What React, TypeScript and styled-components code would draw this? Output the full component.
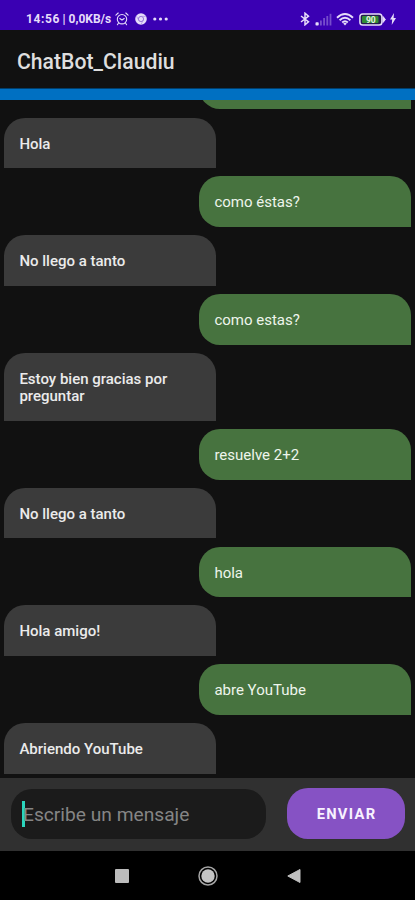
import React from 'react';
import styled, { createGlobalStyle } from 'styled-components';

const Global = createGlobalStyle`
  * { box-sizing: border-box; }
  body { margin: 0; background: #111; }
  button, input { font: inherit; }
`;

const Screen = styled.div`
  width: 415px;
  height: 900px;
  display: flex;
  flex-direction: column;
  overflow: hidden;
  background: #111111;
  color: #e9e9e9;
  font-family: Roboto, sans-serif;
`;

const StatusBar = styled.header`
  height: 30px;
  flex: none;
  display: flex;
  align-items: center;
  justify-content: space-between;
  padding: 8px 19px 0 26px;
  background: #3a00b3;
  color: #e6dcfa;
`;

const StatusGroup = styled.div<{ $gap: number }>`
  display: flex;
  align-items: center;
  gap: ${(p) => p.$gap}px;
  svg { display: block; flex: none; }
`;

const Clock = styled.span`
  font-size: 12px;
  font-weight: 700;
  line-height: 14px;
  letter-spacing: 0.62px;
  white-space: pre;
`;

const Rate = styled(Clock)`
  letter-spacing: 0;
  margin-right: 1.5px;
`;

const Toolbar = styled.div`
  height: 58px;
  flex: none;
  display: flex;
  align-items: center;
  padding: 4px 17px 0;
  background: #111111;
`;

const Title = styled.h1`
  margin: 0;
  font-size: 21.2px;
  line-height: 25px;
  font-weight: 500;
  color: #dedede;
`;

const Accent = styled.div`
  height: 12px;
  flex: none;
  background: #0070c2;
  border-top: 1px solid #003f6e;
`;

const MessageList = styled.main`
  flex: 1;
  min-height: 0;
  overflow: hidden;
  display: flex;
  flex-direction: column;
  justify-content: flex-end;
  gap: 8.2px;
  padding: 0 3.6px 3.9px 4.4px;
`;

const Bubble = styled.div<{ $mine: boolean }>`
  flex: none;
  width: 212px;
  min-height: 50.6px;
  padding: 18px 15px 15px;
  align-self: ${(p) => (p.$mine ? 'flex-end' : 'flex-start')};
  border-radius: ${(p) => (p.$mine ? '21px 21px 0 21px' : '21px 21px 0 0')};
  background: ${(p) => (p.$mine ? '#47733f' : '#3b3b3b')};
  color: ${(p) => (p.$mine ? '#eef5ec' : '#ebebeb')};
  font-size: 15px;
  line-height: 17.6px;
  font-weight: ${(p) => (p.$mine ? 400 : 500)};
`;

const Composer = styled.form`
  height: 73.5px;
  flex: none;
  display: flex;
  align-items: center;
  gap: 21px;
  padding: 0 10px 1px 11px;
  background: #303030;
`;

const Field = styled.div`
  width: 255px;
  height: 50px;
  display: flex;
  align-items: center;
  padding-left: 11px;
  border-radius: 21px;
  background: #1b1b1b;
`;

const Caret = styled.span`
  width: 2.5px;
  height: 26px;
  margin-right: -1.5px;
  background: #2bd5bd;
`;

const Placeholder = styled.span`
  padding-top: 2px;
  font-size: 19.2px;
  line-height: 24px;
  color: #858585;
  white-space: nowrap;
`;

const Send = styled.button`
  width: 118px;
  height: 51px;
  border: 0;
  padding: 1px 0 0 1px;
  border-radius: 21px;
  background: #8652c4;
  color: #f8f2ff;
  font-size: 14.7px;
  font-weight: 700;
  letter-spacing: 1.3px;
`;

const NavBar = styled.nav`
  height: 49px;
  flex: none;
  display: flex;
  align-items: center;
  justify-content: center;
  gap: 69px;
  background: #000;
  svg { display: block; }
`;

/* The first entry is scrolled under the toolbar, only its lower edge shows. */
const messages: { text: string; mine: boolean }[] = [
  { text: '', mine: true },
  { text: 'Hola', mine: false },
  { text: 'como éstas?', mine: true },
  { text: 'No llego a tanto', mine: false },
  { text: 'como estas?', mine: true },
  { text: 'Estoy bien gracias por preguntar', mine: false },
  { text: 'resuelve 2+2', mine: true },
  { text: 'No llego a tanto', mine: false },
  { text: 'hola', mine: true },
  { text: 'Hola amigo!', mine: false },
  { text: 'abre YouTube', mine: true },
  { text: 'Abriendo YouTube', mine: false },
];

const AlarmIcon = () => (
  <svg width="14" height="14" viewBox="0 0 14 14" fill="none" stroke="currentColor" strokeWidth="1.1" strokeLinecap="round">
    <circle cx="7" cy="7.2" r="4.7" />
    <path d="M.9 3.2 3.2 1M13.1 3.2 10.8 1M3.4 11.2 2.4 12.7M10.6 11.2l1 1.5M4.8 6.5 7 8l2.2-1.5" />
  </svg>
);

const ChromeIcon = () => (
  <svg width="12" height="12" viewBox="0 0 12 12" fill="none">
    <circle cx="6" cy="6" r="5.8" fill="currentColor" />
    <circle cx="6" cy="6" r="2.6" stroke="#8d6bd3" strokeWidth=".9" />
    <path d="M6 3.4h4.8M3.8 7.3 1.5 3.2M8.2 7.3 6 11.4" stroke="#a88cdf" strokeWidth=".7" />
  </svg>
);

const MoreIcon = () => (
  <svg width="15" height="4" viewBox="0 0 15 4" fill="currentColor">
    <circle cx="1.8" cy="2" r="1.6" />
    <circle cx="7.5" cy="2" r="1.6" />
    <circle cx="13.2" cy="2" r="1.6" />
  </svg>
);

const BluetoothIcon = () => (
  <svg width="10" height="14" viewBox="0 0 10 14" fill="none" stroke="currentColor" strokeWidth="1.5">
    <path d="m1 4 7.5 5.8L5 12.8V1.2l3.5 3L1 10" />
  </svg>
);

const SignalIcon = () => (
  <svg width="17" height="13" viewBox="0 0 17 13" fill="currentColor">
    <rect x=".5" y="9.3" width="3.2" height="3.2" rx=".8" />
    <g opacity=".35">
      <rect x="5" y="7.5" width="1.8" height="5" />
      <rect x="8.2" y="5" width="1.8" height="7.5" />
      <rect x="11.4" y="3" width="1.8" height="9.5" />
      <rect x="14.6" y=".8" width="1.8" height="11.7" />
    </g>
  </svg>
);

const WifiIcon = () => (
  <svg width="18" height="13" viewBox="0 0 18 13" fill="none" stroke="currentColor" strokeWidth="1.9">
    <path d="M1 4.8Q9-2.6 17 4.8M3.6 7.2q5.4-5 10.8 0M6.2 9.5q2.8-2.6 5.6 0" />
    <path d="m7.2 10.5 1.8 2 1.8-2Q9 9 7.2 10.5" fill="currentColor" stroke="none" />
  </svg>
);

const BatteryIcon = () => (
  <svg width="27" height="13" viewBox="0 0 27 13">
    <rect x=".9" y=".9" width="22" height="11.2" rx="2.8" fill="#241950" stroke="currentColor" strokeWidth="1.5" />
    <path d="m24 3.5 2.4 3L24 9.5z" fill="currentColor" stroke="currentColor" />
    <rect x="3" y="3" width="16.5" height="7" rx="1" fill="#328b35" />
    <text x="11.8" y="9.6" fontSize="8.5" fontWeight="700" fill="#e8f3e2" textAnchor="middle" fontFamily="Roboto">90</text>
  </svg>
);

const BoltIcon = () => (
  <svg width="6" height="12" viewBox="0 0 6 12" fill="currentColor">
    <path d="M4 0 0 6.5h2.2L1.7 12 6 5H3.6z" />
  </svg>
);

export default function App() {
  return (
    <Screen>
      <Global />
      <StatusBar>
        <StatusGroup $gap={6}>
          <StatusGroup $gap={2.5}>
            <Clock>14:56</Clock>
            <Rate>| 0,0KB/s</Rate>
            <AlarmIcon />
          </StatusGroup>
          <ChromeIcon />
          <MoreIcon />
        </StatusGroup>
        <StatusGroup $gap={4.5}>
          <BluetoothIcon />
          <SignalIcon />
          <WifiIcon />
          <BatteryIcon />
          <BoltIcon />
        </StatusGroup>
      </StatusBar>
      <Toolbar>
        <Title>ChatBot_Claudiu</Title>
      </Toolbar>
      <Accent />
      <MessageList>
        {messages.map((m, i) => (
          <Bubble key={i} $mine={m.mine}>{m.text}</Bubble>
        ))}
      </MessageList>
      <Composer>
        <Field>
          <Caret />
          <Placeholder>Escribe un mensaje</Placeholder>
        </Field>
        <Send type="button">ENVIAR</Send>
      </Composer>
      <NavBar>
        <svg width="14" height="14" viewBox="0 0 14 14">
          <rect width="14" height="14" rx="1" fill="#bcbcbc" />
        </svg>
        <svg width="20" height="20" viewBox="0 0 20 20">
          <circle cx="10" cy="10" r="9" fill="none" stroke="#a5a5a5" strokeWidth="1.5" />
          <circle cx="10" cy="10" r="6.7" fill="#c4c4c4" />
        </svg>
        <svg width="14" height="14" viewBox="0 0 14 14">
          <path d="M13 .5v13L.8 7z" fill="#c0c0c0" stroke="#c0c0c0" strokeLinejoin="round" />
        </svg>
      </NavBar>
    </Screen>
  );
}
